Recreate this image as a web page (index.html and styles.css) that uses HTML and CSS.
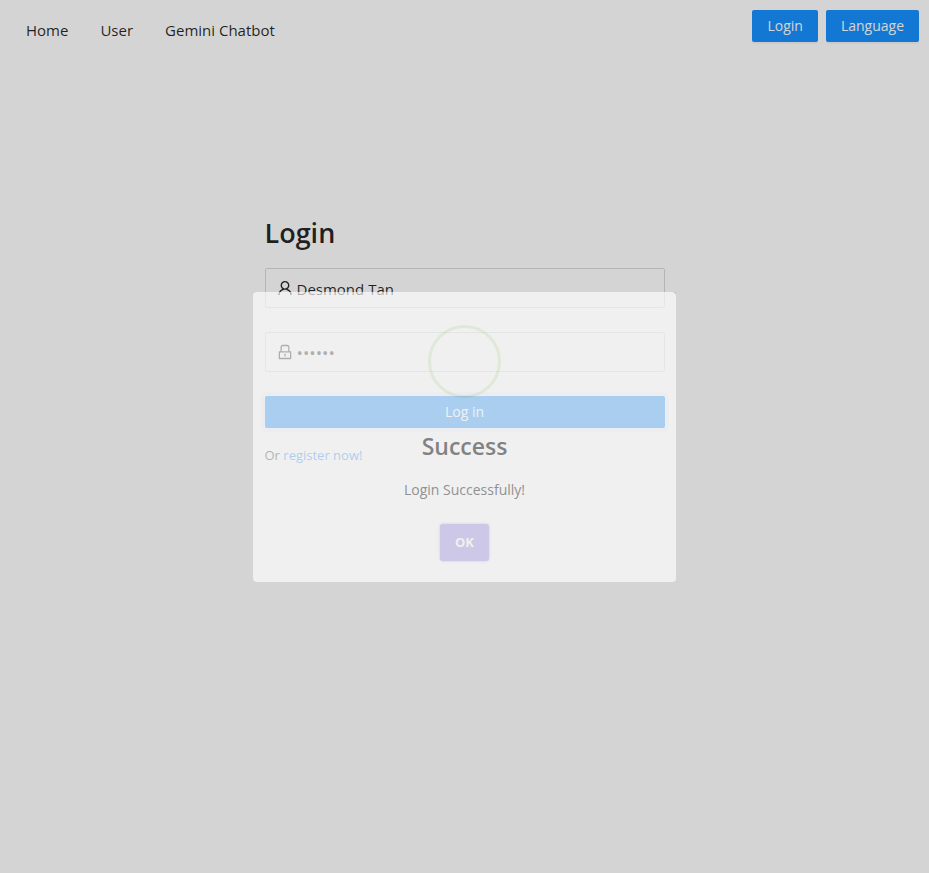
FILE: index.html
```html
<!DOCTYPE html>
<html lang="en">
<head>
<meta charset="utf-8">
<title>Login</title>
<link rel="stylesheet" href="styles.css">
</head>
<body>
<header class="header">
  <nav class="nav">
    <a href="#">Home</a>
    <a href="#">User</a>
    <a href="#">Gemini Chatbot</a>
  </nav>
  <div class="actions">
    <button class="btn" type="button">Login</button>
    <button class="btn" type="button">Language</button>
  </div>
</header>
<main class="main">
  <form class="form">
    <h1 class="heading">Login</h1>
    <label class="field">
      <svg class="icon" viewBox="64 64 896 896" role="img" aria-label="Username"><path d="M858.5 763.6a374 374 0 00-80.6-119.5 375.63 375.63 0 00-119.5-80.6c-.4-.2-.8-.3-1.2-.5C719.5 518 760 444.7 760 362c0-137-111-248-248-248S264 225 264 362c0 82.7 40.5 156 102.8 201.1-.4.2-.8.3-1.2.5-44.8 18.9-85 46-119.5 80.6a375.63 375.63 0 00-80.6 119.5A371.7 371.7 0 00136 901.8a8 8 0 008 8.2h60c4.4 0 7.9-3.5 8-7.8 2-77.2 33-149.5 87.8-204.3 56.7-56.7 132-87.9 212.2-87.9s155.5 31.2 212.2 87.9C779 752.7 810 825 812 902.2c.1 4.4 3.6 7.8 8 7.8h60a8 8 0 008-8.2c-1-47.8-10.9-94.3-29.5-138.2zM512 534c-45.9 0-89.1-17.9-121.6-50.4S340 407.9 340 362c0-45.9 17.9-89.1 50.4-121.6S466.1 190 512 190s89.1 17.9 121.6 50.4S684 316.1 684 362c0 45.9-17.9 89.1-50.4 121.6S557.9 534 512 534z"/></svg>
      <input class="input" type="text" value="Desmond Tan">
    </label>
    <label class="field">
      <svg class="icon" viewBox="64 64 896 896" role="img" aria-label="Password"><path d="M832 464h-68V240c0-70.7-57.3-128-128-128H388c-70.7 0-128 57.3-128 128v224h-68c-17.7 0-32 14.3-32 32v384c0 17.7 14.3 32 32 32h640c17.7 0 32-14.3 32-32V496c0-17.7-14.3-32-32-32zM332 240c0-30.9 25.1-56 56-56h248c30.9 0 56 25.1 56 56v224H332V240zm460 600H232V536h560v304zM484 701v53c0 4.4 3.6 8 8 8h40c4.4 0 8-3.6 8-8v-53a48.1 48.1 0 10-56 0z"/></svg>
      <input class="input password" type="password" value="secret">
    </label>
    <button class="btn submit" type="button">Log in</button>
    <p class="hint">Or <a href="#">register now!</a></p>
  </form>
</main>
<div class="overlay">
  <section class="dialog" role="dialog" aria-labelledby="dialog-title">
    <div class="ring"></div>
    <h2 class="title" id="dialog-title">Success</h2>
    <p class="message">Login Successfully!</p>
    <button class="ok" type="button">OK</button>
  </section>
</div>
</body>
</html>
```
FILE: styles.css
```css
* {
  box-sizing: border-box;
}

body {
  margin: 0;
  min-height: 100vh;
  display: flex;
  flex-direction: column;
  background: #fff;
  color: rgba(0, 0, 0, 0.85);
  font: 14px/22px "Open Sans", "Noto Sans", sans-serif;
}

a {
  text-decoration: none;
}

.header {
  display: flex;
  justify-content: space-between;
  padding: 10px;
}

.nav {
  display: flex;
  gap: 32px;
  padding: 9px 16px 11px;
  font-size: 15px;
}

.nav a {
  color: rgba(0, 0, 0, 0.85);
}

.actions {
  display: flex;
  align-items: flex-start;
  gap: 8px;
}

.btn {
  height: 32px;
  padding: 0 15px;
  border: 0;
  border-radius: 2px;
  background: #1890ff;
  color: #fff;
  font: inherit;
  box-shadow: 0 2px 0 rgba(0, 0, 0, 0.04);
}

.main {
  flex: 1;
  display: flex;
  justify-content: center;
  padding: 152px 16px 0;
}

.form {
  width: 100%;
  max-width: 400px;
}

.heading {
  margin: 0 0 16px;
  font-size: 27px;
  font-weight: 600;
  line-height: 38px;
}

.field {
  display: flex;
  align-items: center;
  gap: 4px;
  height: 40px;
  margin-bottom: 24px;
  padding: 0 11px;
  border: 1px solid #d9d9d9;
  border-radius: 2px;
}

.icon {
  flex: none;
  width: 16px;
  height: 16px;
  fill: currentColor;
}

.input {
  flex: 1;
  min-width: 0;
  padding: 2px 0 0;
  border: 0;
  outline: 0;
  background: transparent;
  color: inherit;
  font: inherit;
  font-size: 15px;
}

.password {
  font-size: 17px;
}

.submit {
  display: block;
  width: 100%;
  box-shadow: 0 0 0 4px rgba(24, 144, 255, 0.08);
}

.hint {
  margin: 16px 0 0;
  font-size: 13px;
}

.hint a {
  color: #1890ff;
}

.overlay {
  position: fixed;
  inset: 0;
  display: flex;
  align-items: center;
  justify-content: center;
  padding: 8px;
  background: rgba(0, 0, 0, 0.168);
}

.dialog {
  display: flex;
  flex-direction: column;
  align-items: center;
  width: 100%;
  max-width: 423px;
  padding: 33px 16px 21px;
  border-radius: 4px;
  background: #fff;
  color: #545454;
  opacity: 0.64;
}

.ring {
  width: 73px;
  height: 73px;
  border: 3px solid rgba(165, 220, 134, 0.3);
  border-radius: 50%;
}

.title {
  margin: 32px 0 0;
  font-size: 23px;
  font-weight: 600;
  line-height: 32px;
}

.message {
  margin: 17px 0 23px;
  color: #6a6a6a;
}

.ok {
  width: 49px;
  height: 37px;
  padding: 0;
  border: 0;
  border-radius: 3px;
  background: #c8c1f1;
  color: #fff;
  font: inherit;
  font-size: 13px;
  font-weight: 700;
  box-shadow: 0 0 3px #c8c1f1;
}
```
